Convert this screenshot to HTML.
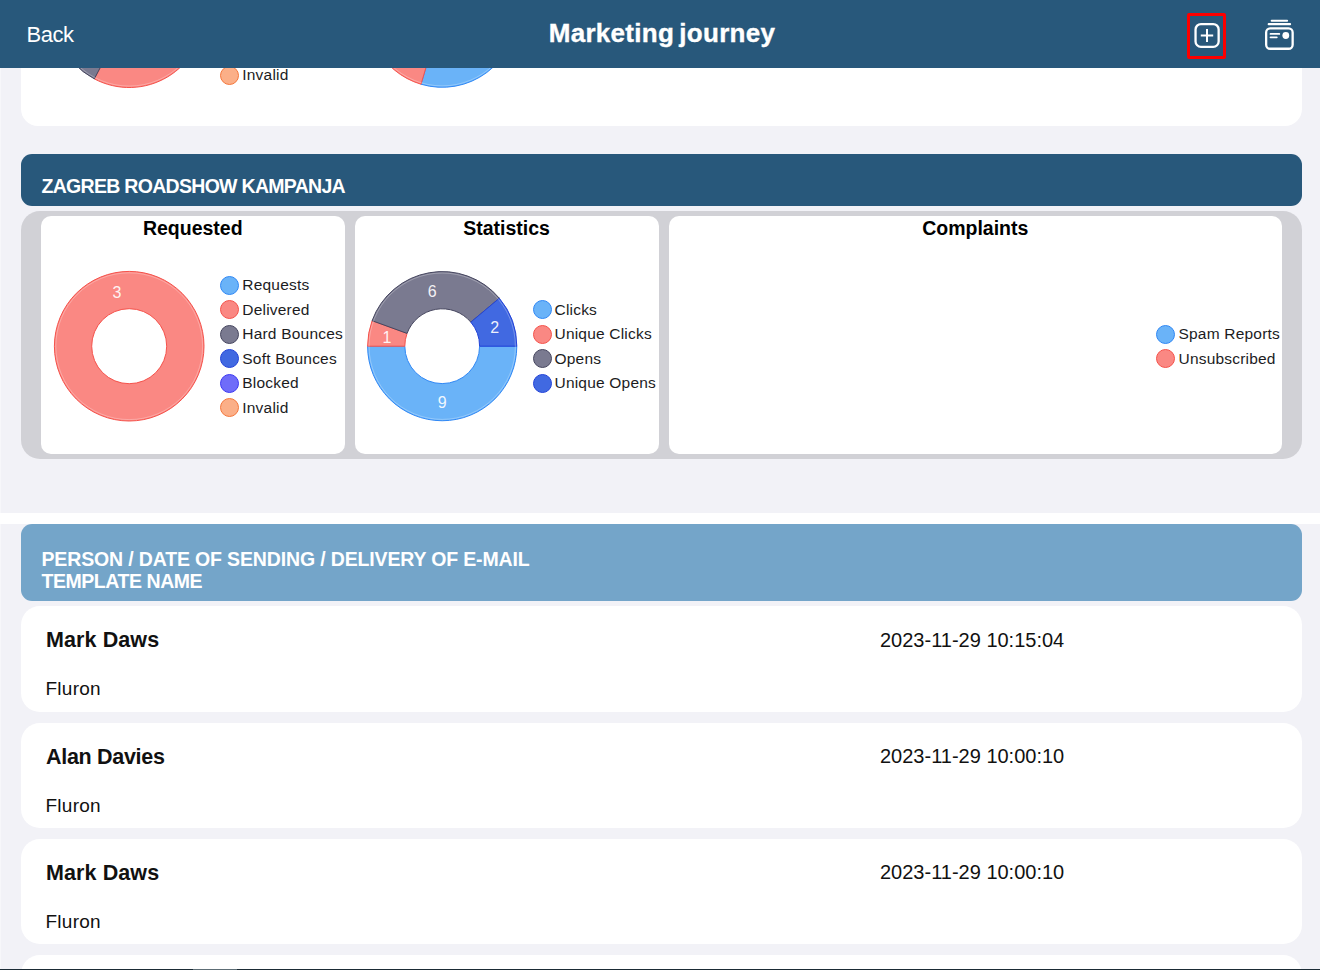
<!DOCTYPE html>
<html><head><meta charset="utf-8">
<style>
*{margin:0;padding:0;box-sizing:border-box}
html,body{width:1320px;height:970px;overflow:hidden;background:#F2F2F7;font-family:"Liberation Sans",sans-serif}
.abs{position:absolute}
.hdr{left:0;top:0;width:1320px;height:67.5px;background:#28587B;z-index:10}
.txt{position:absolute;white-space:nowrap;line-height:1}
.card{position:absolute;background:#fff}
.leg{position:absolute;font-size:15.5px;letter-spacing:0.2px;color:#1c1c1e;white-space:nowrap;line-height:1}
.dot{position:absolute;width:19px;height:19px;border-radius:50%}
.ttl{position:absolute;font-size:19.5px;font-weight:bold;color:#000;text-align:center;line-height:1;top:3.3px;left:0;right:0}
.row{position:absolute;left:21px;width:1281px;height:105.5px;background:#fff;border-radius:19px}
.nm{position:absolute;left:25px;font-size:21.5px;font-weight:bold;color:#111;line-height:1;white-space:nowrap}
.tp{position:absolute;left:24.5px;font-size:19px;letter-spacing:0.25px;color:#111;line-height:1;white-space:nowrap}
.dt{position:absolute;left:859px;font-size:20px;color:#111;line-height:1;white-space:nowrap;letter-spacing:0px}
</style></head><body>
<div class="abs" style="left:0;top:0;width:1px;height:970px;background:#f7f7fa"></div>

<!-- top partial card -->
<div class="card" style="left:21px;top:0;width:1281px;height:125.5px;border-radius:0 0 17px 17px"></div>

<div class="dot" style="left:220.1px;top:-57.3px;background:#6AB3F8;border:1.5px solid #3088F5"></div>
<div class="leg" style="left:242.3px;top:-55.6px">Requests</div>
<div class="dot" style="left:220.1px;top:-32.8px;background:#FA8883;border:1.5px solid #F5524B"></div>
<div class="leg" style="left:242.3px;top:-31.1px">Delivered</div>
<div class="dot" style="left:220.1px;top:-8.1px;background:#7A7A90;border:1.5px solid #46465F"></div>
<div class="leg" style="left:242.3px;top:-6.4px">Hard Bounces</div>
<div class="dot" style="left:220.1px;top:16.4px;background:#4169E1;border:1.5px solid #2343D8"></div>
<div class="leg" style="left:242.3px;top:18.1px">Soft Bounces</div>
<div class="dot" style="left:220.1px;top:40.9px;background:#6F6CF9;border:1.5px solid #3C38F2"></div>
<div class="leg" style="left:242.3px;top:42.6px">Blocked</div>
<div class="dot" style="left:220.1px;top:65.5px;background:#FBAF88;border:1.5px solid #F5773C"></div>
<div class="leg" style="left:242.3px;top:67.2px">Invalid</div>
<svg class="abs" style="left:0;top:0;z-index:5" width="1320" height="970" viewBox="0 0 1320 970"><path d="M204.00 346.20A74.8 74.8 0 1 1 54.40 346.20A74.8 74.8 0 1 1 204.00 346.20ZM166.70 346.20A37.5 37.5 0 1 0 91.70 346.20A37.5 37.5 0 1 0 166.70 346.20Z" fill-rule="evenodd" fill="#FA8883" stroke="#F5524B" stroke-width="1"/>
<path d="M516.80 346.20A74.6 74.6 0 0 1 367.60 346.20L404.80 346.20A37.4 37.4 0 0 0 479.60 346.20Z" fill="#6AB3F8" stroke="#3088F5" stroke-width="1"/>
<path d="M367.60 346.20A74.6 74.6 0 0 1 372.10 320.69L407.06 333.41A37.4 37.4 0 0 0 404.80 346.20Z" fill="#FA8883" stroke="#F5524B" stroke-width="1"/>
<path d="M372.10 320.69A74.6 74.6 0 0 1 499.35 298.25L470.85 322.16A37.4 37.4 0 0 0 407.06 333.41Z" fill="#7A7A90" stroke="#46465F" stroke-width="1"/>
<path d="M499.35 298.25A74.6 74.6 0 0 1 516.80 346.20L479.60 346.20A37.4 37.4 0 0 0 470.85 322.16Z" fill="#4169E1" stroke="#2343D8" stroke-width="1"/>
<path d="M204.00 12.70A74.8 74.8 0 0 1 94.31 78.87L111.71 45.87A37.5 37.5 0 0 0 166.70 12.70Z" fill="#FA8883" stroke="#F5524B" stroke-width="1"/>
<path d="M94.31 78.87A74.8 74.8 0 0 1 58.91 -12.88L93.96 -0.13A37.5 37.5 0 0 0 111.71 45.87Z" fill="#7A7A90" stroke="#46465F" stroke-width="1"/>
<path d="M58.91 -12.88A74.8 74.8 0 0 1 204.00 12.70L166.70 12.70A37.5 37.5 0 0 0 93.96 -0.13Z" fill="#6AB3F8" stroke="#3088F5" stroke-width="1"/>
<path d="M516.80 12.70A74.6 74.6 0 0 1 421.01 84.23L431.58 48.56A37.4 37.4 0 0 0 479.60 12.70Z" fill="#6AB3F8" stroke="#3088F5" stroke-width="1"/>
<path d="M421.01 84.23A74.6 74.6 0 0 1 372.10 -12.81L407.06 -0.09A37.4 37.4 0 0 0 431.58 48.56Z" fill="#FA8883" stroke="#F5524B" stroke-width="1"/>
<path d="M372.10 -12.81A74.6 74.6 0 0 1 516.80 12.70L479.60 12.70A37.4 37.4 0 0 0 407.06 -0.09Z" fill="#7A7A90" stroke="#46465F" stroke-width="1"/>
<circle cx="129.2" cy="346.2" r="73.40" fill="none" stroke="#fff" stroke-opacity="0.35" stroke-width="0.8"/>
<circle cx="442.2" cy="346.2" r="73.20" fill="none" stroke="#fff" stroke-opacity="0.35" stroke-width="0.8"/>
<circle cx="129.2" cy="12.7" r="73.40" fill="none" stroke="#fff" stroke-opacity="0.35" stroke-width="0.8"/>
<circle cx="442.2" cy="12.7" r="73.20" fill="none" stroke="#fff" stroke-opacity="0.35" stroke-width="0.8"/>
<text x="117" y="297.7" text-anchor="middle" font-size="16" fill="#fff" fill-opacity="0.92" font-family="Liberation Sans">3</text>
<text x="432.3" y="297.2" text-anchor="middle" font-size="16" fill="#fff" fill-opacity="0.92" font-family="Liberation Sans">6</text>
<text x="494.8" y="333.2" text-anchor="middle" font-size="16" fill="#fff" fill-opacity="0.92" font-family="Liberation Sans">2</text>
<text x="387" y="342.7" text-anchor="middle" font-size="16" fill="#fff" fill-opacity="0.92" font-family="Liberation Sans">1</text>
<text x="442.2" y="408.2" text-anchor="middle" font-size="16" fill="#fff" fill-opacity="0.92" font-family="Liberation Sans">9</text></svg>
<!-- header -->
<div class="abs hdr">
  <div class="txt" style="left:26.5px;top:24.3px;font-size:22px;color:#fff;letter-spacing:-0.45px">Back</div>
  <div class="abs" style="left:1187.1px;top:12.9px;width:38.9px;height:45.9px;border:3px solid #FF0000;border-radius:2px"></div>
  <svg class="abs" style="left:0;top:0" width="1320" height="67" viewBox="0 0 1320 67">
    <rect x="1195.55" y="24.05" width="23.1" height="22.8" rx="5.4" fill="none" stroke="#fff" stroke-width="2.3"/>
    <path d="M1200.8 35.6H1213.2M1207 29.1V42.1" stroke="#fff" stroke-width="2" fill="none"/>
    <rect x="1266.15" y="28.45" width="26.5" height="20.3" rx="4" fill="none" stroke="#fff" stroke-width="2.3"/>
    <path d="M1271.7 20.75H1287.1" stroke="#fff" stroke-width="2.1" stroke-linecap="round" fill="none"/>
    <path d="M1268.7 24.15H1290.1" stroke="#fff" stroke-width="2.1" stroke-linecap="round" fill="none"/>
    <path d="M1270.5 33.9H1279.3M1270.5 37.3H1276.8" stroke="#fff" stroke-width="1.8" stroke-linecap="round" fill="none"/>
    <circle cx="1285.8" cy="35.5" r="3.4" fill="#fff"/>
  </svg>

  <div class="txt" style="left:0;width:1324px;text-align:center;top:20.3px;font-size:26px;font-weight:bold;color:#fff;letter-spacing:0.3px;word-spacing:-2.5px;-webkit-text-stroke:0.35px #fff">Marketing journey</div>
</div>

<!-- section header -->
<div class="abs" style="left:21px;top:154px;width:1281px;height:51.5px;background:#28587B;border-radius:11px">
  <div class="txt" style="left:20.5px;top:22.6px;font-size:19.5px;font-weight:bold;color:#fff;letter-spacing:-0.7px">ZAGREB ROADSHOW KAMPANJA</div>
</div>

<!-- gray container -->
<div class="abs" style="left:21px;top:211px;width:1281px;height:247.5px;background:#D1D1D6;border-radius:19px"></div>
<div class="card" style="left:41px;top:216px;width:303.5px;height:238px;border-radius:10px">
  <div class="ttl">Requested</div>
</div>
<div class="card" style="left:354.5px;top:216px;width:304px;height:238px;border-radius:10px">
  <div class="ttl">Statistics</div>
</div>
<div class="card" style="left:668.5px;top:216px;width:613.5px;height:238px;border-radius:10px">
  <div class="ttl">Complaints</div>
</div>

<div class="abs" style="left:0;top:0;z-index:6">
<div class="dot" style="left:220.1px;top:275.5px;background:#6AB3F8;border:1.5px solid #3088F5"></div>
<div class="leg" style="left:242.3px;top:277.2px">Requests</div>
<div class="dot" style="left:220.1px;top:300.0px;background:#FA8883;border:1.5px solid #F5524B"></div>
<div class="leg" style="left:242.3px;top:301.7px">Delivered</div>
<div class="dot" style="left:220.1px;top:324.7px;background:#7A7A90;border:1.5px solid #46465F"></div>
<div class="leg" style="left:242.3px;top:326.4px">Hard Bounces</div>
<div class="dot" style="left:220.1px;top:349.2px;background:#4169E1;border:1.5px solid #2343D8"></div>
<div class="leg" style="left:242.3px;top:350.9px">Soft Bounces</div>
<div class="dot" style="left:220.1px;top:373.7px;background:#6F6CF9;border:1.5px solid #3C38F2"></div>
<div class="leg" style="left:242.3px;top:375.4px">Blocked</div>
<div class="dot" style="left:220.1px;top:398.3px;background:#FBAF88;border:1.5px solid #F5773C"></div>
<div class="leg" style="left:242.3px;top:400.0px">Invalid</div>
<div class="dot" style="left:532.5px;top:300.0px;background:#6AB3F8;border:1.5px solid #3088F5"></div>
<div class="leg" style="left:554.5px;top:301.7px">Clicks</div>
<div class="dot" style="left:532.5px;top:324.7px;background:#FA8883;border:1.5px solid #F5524B"></div>
<div class="leg" style="left:554.5px;top:326.4px">Unique Clicks</div>
<div class="dot" style="left:532.5px;top:349.2px;background:#7A7A90;border:1.5px solid #46465F"></div>
<div class="leg" style="left:554.5px;top:350.9px">Opens</div>
<div class="dot" style="left:532.5px;top:373.7px;background:#4169E1;border:1.5px solid #2343D8"></div>
<div class="leg" style="left:554.5px;top:375.4px">Unique Opens</div>
<div class="dot" style="left:1156.0px;top:324.7px;background:#6AB3F8;border:1.5px solid #3088F5"></div>
<div class="leg" style="left:1178.5px;top:326.4px">Spam Reports</div>
<div class="dot" style="left:1156.0px;top:349.2px;background:#FA8883;border:1.5px solid #F5524B"></div>
<div class="leg" style="left:1178.5px;top:350.9px">Unsubscribed</div>
</div>
<!-- white strip -->
<div class="abs" style="left:0;top:513px;width:1320px;height:10.5px;background:#fff"></div>

<!-- light blue header -->
<div class="abs" style="left:21px;top:523.5px;width:1281px;height:77px;background:#74A5C9;border-radius:11px">
  <div class="txt" style="left:20.5px;top:24.3px;font-size:19.5px;font-weight:bold;color:#fff;line-height:22.5px;letter-spacing:-0.15px">PERSON / DATE OF SENDING / DELIVERY OF E-MAIL<br><span style="letter-spacing:-0.45px">TEMPLATE NAME</span></div>
</div>

<!-- rows -->
<div class="row" style="top:606px"><div class="nm" style="top:24px;letter-spacing:0.1px">Mark Daws</div><div class="dt" style="top:23.8px">2023-11-29 10:15:04</div><div class="tp" style="top:73.3px">Fluron</div></div>
<div class="row" style="top:722.5px"><div class="nm" style="top:24px;letter-spacing:-0.3px">Alan Davies</div><div class="dt" style="top:23.8px">2023-11-29 10:00:10</div><div class="tp" style="top:73.3px">Fluron</div></div>
<div class="row" style="top:838.5px"><div class="nm" style="top:24px;letter-spacing:0.1px">Mark Daws</div><div class="dt" style="top:23.8px">2023-11-29 10:00:10</div><div class="tp" style="top:73.3px">Fluron</div></div>
<div class="row" style="top:955px"></div>

<div class="abs" style="left:0;top:969px;width:1320px;height:1px;background:#1b2b35"></div>
<div class="abs" style="left:193px;top:969px;width:44px;height:1px;background:#5d6d75"></div>
</body></html>
